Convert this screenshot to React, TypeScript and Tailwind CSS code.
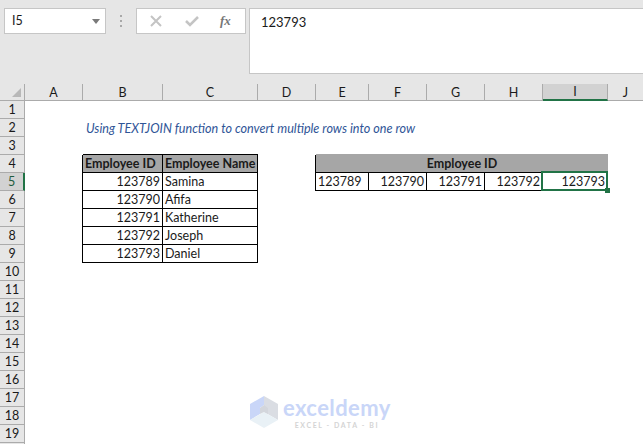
import { FC, ReactNode } from 'react';

const columns = ['A', 'B', 'C', 'D', 'E', 'F', 'G', 'H', 'I', 'J'];
const rows = Array.from({ length: 20 }, (_, i) => i + 1);

type Cell = { text?: string; className?: string };

const tableLine = 'border-r border-b border-r-black border-b-black';
const num = 'justify-end pr-[2px]';
const txt = 'justify-start pl-[2px]';
const head = 'bg-[#a6a6a6] font-bold';

// only the cells that differ from a blank sheet cell
const cells: Record<string, Cell> = {
	A4: { className: 'border-r border-r-black' },
	A5: { className: 'border-r border-r-black' },
	A6: { className: 'border-r border-r-black' },
	A7: { className: 'border-r border-r-black' },
	A8: { className: 'border-r border-r-black' },
	A9: { className: 'border-r border-r-black' },
	B3: { className: 'border-b border-b-black' },
	C3: { className: 'border-b border-b-black' },
	B4: { text: 'Employee ID', className: `${tableLine} ${head} ${txt}` },
	C4: { text: 'Employee Name', className: `${tableLine} ${head} ${txt}` },
	B5: { text: '123789', className: `${tableLine} ${num}` },
	C5: { text: 'Samina', className: `${tableLine} ${txt}` },
	B6: { text: '123790', className: `${tableLine} ${num}` },
	C6: { text: 'Afifa', className: `${tableLine} ${txt}` },
	B7: { text: '123791', className: `${tableLine} ${num}` },
	C7: { text: 'Katherine', className: `${tableLine} ${txt}` },
	B8: { text: '123792', className: `${tableLine} ${num}` },
	C8: { text: 'Joseph', className: `${tableLine} ${txt}` },
	B9: { text: '123793', className: `${tableLine} ${num}` },
	C9: { text: 'Daniel', className: `${tableLine} ${txt}` },
	D4: { className: 'border-r border-r-black' },
	D5: { className: 'border-r border-r-black' },
	E3: { className: 'border-b border-b-[#a6a6a6]' },
	F3: { className: 'border-b border-b-[#a6a6a6]' },
	G3: { className: 'border-b border-b-[#a6a6a6]' },
	H3: { className: 'border-b border-b-[#a6a6a6]' },
	I3: { className: 'border-b border-b-[#a6a6a6]' },
	E5: { text: '123789', className: `${tableLine} ${txt}` },
	F5: { text: '123790', className: `${tableLine} ${num}` },
	G5: { text: '123791', className: `${tableLine} ${num}` },
	H5: { text: '123792', className: `${tableLine} ${num}` },
	I5: { text: '123793', className: `${tableLine} ${num}` },
};

const Logo: FC = () => (
	<svg width="30" height="32" viewBox="0 0 30 32">
		<path d="M15 0 L29 8 L29 24 L15 16 Z" fill="#dadde3" />
		<path d="M15 0 L1 8 L1 24 L11 18 L11 12 L15 9 Z" fill="#c9d6f8" />
		<path d="M1 24 L15 16 L29 24 L15 32 Z" fill="#e9f1f6" />
		<path d="M11 12 L15 9 L19 12 L19 18 L15 16 L11 18 Z" fill="#d3d6dc" />
	</svg>
);

const Box: FC<{ className: string; children?: ReactNode }> = ({ className, children }) => (
	<div className={`bg-white border border-[#c6c6c6] ${className}`}>{children}</div>
);

const FormulaBar: FC = () => (
	<div className="h-[84px] bg-[#e6e6e6] flex items-start pt-[8px] pl-[4px] shrink-0">
		<Box className="w-[102px] h-[26px] flex items-center justify-between pl-[7px] pr-[5px] pt-[1px]">
			<span>I5</span>
			<span className="w-0 h-0 border-x-[4px] border-x-transparent border-t-[5px] border-t-[#7a7a7a]" />
		</Box>
		<div className="w-[30px] h-[26px] flex flex-col items-center justify-center gap-[3px]">
			<span className="w-[2px] h-[2px] bg-[#a8a8a8]" />
			<span className="w-[2px] h-[2px] bg-[#a8a8a8]" />
			<span className="w-[2px] h-[2px] bg-[#a8a8a8]" />
		</div>
		<Box className="w-[110px] h-[26px] flex items-center">
			<svg className="ml-[13px]" width="12" height="12" viewBox="0 0 12 12">
				<path d="M1 1 L11 11 M11 1 L1 11" stroke="#c4c4c4" strokeWidth="2" fill="none" />
			</svg>
			<svg className="ml-[23px]" width="14" height="12" viewBox="0 0 14 12">
				<path d="M1 6 L5 10 L13 2" stroke="#c4c4c4" strokeWidth="2.5" fill="none" />
			</svg>
			<span className="ml-[21px] font-['Liberation_Serif',serif] italic font-bold text-[13px] text-[#777777]">fx</span>
		</Box>
		<Box className="ml-[3px] flex-1 h-[66px] pl-[11px] pt-[4px] border-r-0">
			<span className="text-[13px]">123793</span>
		</Box>
	</div>
);

const Sheet: FC = () => (
	<div className="grid grid-cols-[25px_58px_80px_95px_58px_53px_58px_58px_58px_65px_35px] grid-rows-[17px] auto-rows-[18px] *:pt-[2px]">
		<div className="bg-[#e6e6e6] border-r border-b border-[#ababab] flex items-end justify-end pr-[3px] pb-[3px]">
			<span className="w-0 h-0 border-l-[9px] border-l-transparent border-b-[9px] border-b-[#b8b8b8]" />
		</div>
		{columns.map((col) => (
			<div
				key={col}
				className={
					col === 'I'
						? 'bg-[#d2d2d2] border-b-2 border-b-[#217346] border-r border-r-[#ababab] flex items-center justify-center'
						: col === 'J'
							? 'bg-[#e6e6e6] border-b border-b-[#ababab] flex items-center justify-center'
							: 'bg-[#e6e6e6] border-b border-b-[#ababab] border-r border-r-[#ababab] flex items-center justify-center'
				}
			>
				{col}
			</div>
		))}
		{rows.map((row) => (
			<Row key={row} row={row} />
		))}
	</div>
);

const Row: FC<{ row: number }> = ({ row }) => (
	<>
		<div
			className={
				row === 5
					? 'bg-[#d2d2d2] border-b border-b-[#ababab] border-r-2 border-r-[#217346] flex items-center justify-center text-[#1f5c3f]'
					: 'bg-[#e6e6e6] border-b border-b-[#ababab] border-r border-r-[#ababab] flex items-center justify-center'
			}
		>
			{row < 20 && row}
		</div>
		{columns.map((col) => {
			if (row === 2 && col === 'B') {
				return (
					<div key={col} className="relative">
						<span className="absolute left-[3px] top-[1px] h-full flex items-center whitespace-nowrap italic text-[12.6px] text-[#2f5597]">
							Using TEXTJOIN function to convert multiple rows into one row
						</span>
					</div>
				);
			}
			if (row === 4 && col === 'E') {
				return (
					<div
						key={col}
						className={`col-span-5 border-b border-b-black flex items-center justify-center ${head}`}
					>
						Employee ID
					</div>
				);
			}
			if (row === 4 && ['F', 'G', 'H', 'I'].includes(col)) return null;
			const cell = cells[`${col}${row}`];
			return (
				<div key={col} className={`relative flex items-center min-w-0 ${cell?.className ?? ''}`}>
					{cell?.text}
					{row === 5 && col === 'I' && (
						<span className="absolute -left-[2px] -top-[2px] -right-[1px] -bottom-[1px] border-2 border-[#217346]">
							<span className="absolute -right-[4px] -bottom-[4px] w-[5px] h-[5px] bg-[#217346]" />
						</span>
					)}
				</div>
			);
		})}
	</>
);

export default function App() {
	return (
		<div className="relative w-[643px] h-[444px] overflow-hidden bg-white flex flex-col font-['Lato',sans-serif] text-[12.5px] text-[#1a1a1a]">
			<FormulaBar />
			<Sheet />
			{/* watermark sits over the grid */}
			<div className="absolute left-[249px] top-[396px] flex items-start gap-[4px]">
				<Logo />
				<div className="flex flex-col items-center pt-[2px]">
					<span className="text-[22px] leading-[20px] font-bold tracking-[0.4px] text-[#c9d6f8]">exceldemy</span>
					<span className="text-[7px] leading-[8px] mt-[3px] font-bold tracking-[1.6px] text-[#d4d4d4]">EXCEL - DATA - BI</span>
				</div>
			</div>
		</div>
	);
}
